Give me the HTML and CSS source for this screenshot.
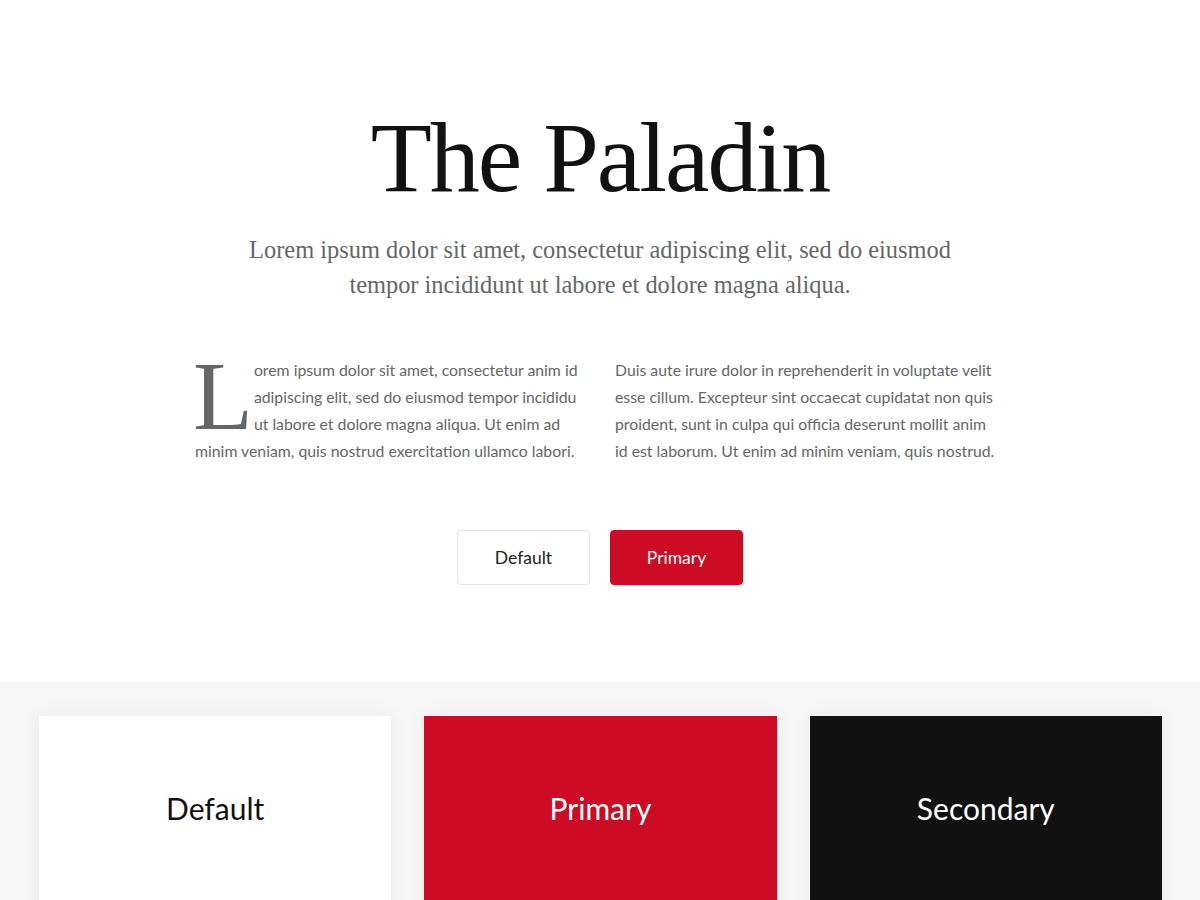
FILE: index.html
```html
<!DOCTYPE html>
<html lang="en">
<head>
<meta charset="utf-8">
<title>The Paladin</title>
<link rel="stylesheet" href="styles.css">
</head>
<body>
<section class="hero">
  <h1 class="title">The Paladin</h1>
  <p class="lead">Lorem ipsum dolor sit amet, consectetur adipiscing elit, sed do eiusmod<br>tempor incididunt ut labore et dolore magna aliqua.</p>
  <div class="columns">
    <p class="col dropcap">Lorem ipsum dolor sit amet, consectetur anim id adipiscing elit, sed do eiusmod tempor incididu ut labore et dolore magna aliqua. Ut enim ad minim veniam, quis nostrud exercitation ullamco labori.</p>
    <p class="col col-right">Duis aute irure dolor in reprehenderit in voluptate velit esse cillum. Excepteur sint occaecat cupidatat non quis proident, sunt in culpa qui officia deserunt mollit anim id est laborum. Ut enim ad minim veniam, quis nostrud.</p>
  </div>
  <div class="buttons">
    <button class="btn btn-default">Default</button>
    <button class="btn btn-primary">Primary</button>
  </div>
</section>
<section class="cards">
  <div class="card card-default">Default</div>
  <div class="card card-primary">Primary</div>
  <div class="card card-secondary">Secondary</div>
</section>
</body>
</html>
```
FILE: styles.css
```css
* { box-sizing: border-box; }
html, body { margin: 0; padding: 0; background: #fff; }
body { font-family: "Lato", "Nunito Sans", sans-serif; color: #666; overflow: hidden; }

.hero {
  display: flex;
  flex-direction: column;
  align-items: center;
  padding: 108px 0 97px;
}
.title {
  margin: 0;
  font-family: "Liberation Serif", "Times New Roman", serif;
  font-weight: 400;
  font-size: 100px;
  line-height: 1;
  letter-spacing: -2px;
  color: #111;
}
.lead {
  margin: 24px 0 0;
  font-family: "Liberation Serif", "Times New Roman", serif;
  font-size: 24.4px;
  line-height: 35px;
  text-align: center;
  color: #666;
}
.columns {
  display: grid;
  grid-template-columns: 390px 390px;
  gap: 30px;
  margin-top: 54px;
}
.col {
  margin: 0;
  font-size: 15.8px;
  line-height: 27px;
  color: #666;
}
.col-right { padding-right: 4px; }
.dropcap::first-letter {
  float: left;
  font-family: "Liberation Serif", "Times New Roman", serif;
  font-size: 98px;
  line-height: 76px;
  padding: 0 1px 0 0;
  margin: 2px 0 0 -2px;
  color: #666;
}
.buttons {
  display: flex;
  gap: 20px;
  margin-top: 66px;
}
.btn {
  width: 133px;
  height: 55px;
  border-radius: 4px;
  font-family: inherit;
  font-size: 17.5px;
  cursor: pointer;
}
.btn-default { background: #fff; border: 1px solid #e5e5e5; color: #222; }
.btn-primary { background: #cc0c25; border: 1px solid #cc0c25; color: #fff; }

.cards {
  background: #f7f7f7;
  display: grid;
  grid-template-columns: repeat(3, 1fr);
  gap: 33px;
  padding: 34px 38px 0 39px;
}
.card {
  height: 240px;
  display: flex;
  justify-content: center;
  padding-top: 74px;
  font-size: 30px;
  box-shadow: 0 0 20px rgba(0,0,0,0.06);
}
.card-default { background: #fff; color: #111; }
.card-primary { background: #cc0c25; color: #fff; }
.card-secondary { background: #111; color: #fff; }
```
